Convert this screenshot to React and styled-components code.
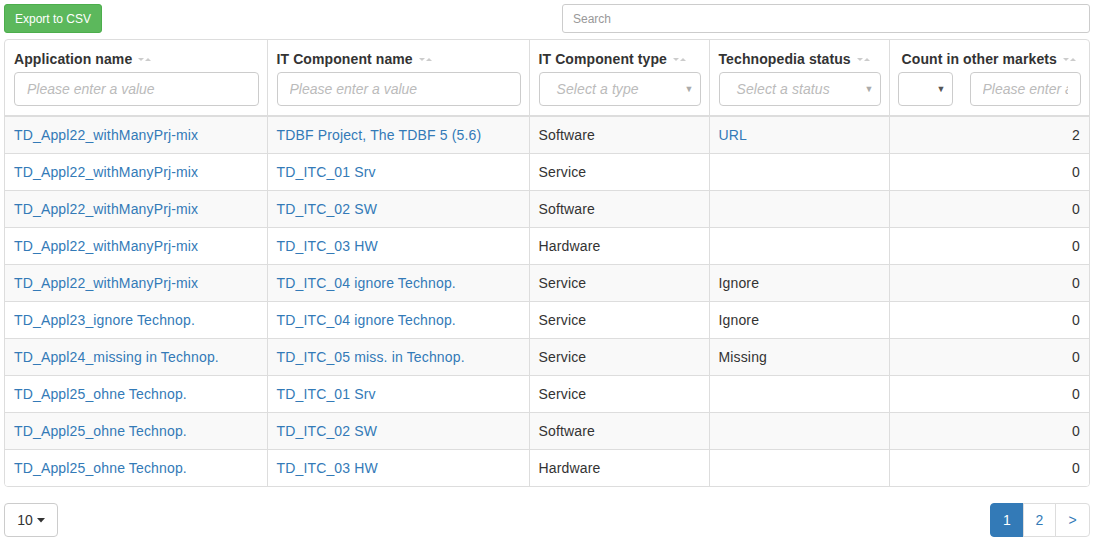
import React from "react"
import styled, { createGlobalStyle } from "styled-components"

const GlobalStyle = createGlobalStyle`
  body {
    margin: 0;
    font-family: "Liberation Sans", Arial, sans-serif;
    font-size: 14px;
    color: #333;
    background: #fff;
  }
  * { box-sizing: border-box; }
`

const Page = styled.div`
  padding: 4px 7px 0 4px;
  width: 1097px;
`

const Toolbar = styled.div`
  display: flex;
  justify-content: space-between;
  align-items: center;
  height: 29px;
  margin-bottom: 6px;
`

const ExportButton = styled.button`
  height: 29px;
  width: 98px;
  padding: 0;
  font-family: inherit;
  font-size: 12px;
  color: #fff;
  background: #5cb85c;
  border: 1px solid #4cae4c;
  border-radius: 3px;
`

const SearchInput = styled.input`
  width: 528px;
  height: 29px;
  padding: 5px 10px;
  font-family: inherit;
  font-size: 12px;
  border: 1px solid #ccc;
  border-radius: 3px;
  color: #555;
  &::placeholder { color: #999; }
`

const TableBox = styled.div`
  border: 1px solid #ddd;
  border-radius: 4px;
  overflow: hidden;
`

const Table = styled.table`
  width: 100%;
  border-collapse: collapse;
  table-layout: fixed;
  letter-spacing: 0.15px;
`

const Th = styled.th`
  text-align: left;
  vertical-align: top;
  padding: 9px 8px 9px 9px;
  border-left: 1px solid #ddd;
  border-bottom: 2px solid #ddd;
  font-weight: bold;
  letter-spacing: 0.1px;
  &:first-child { border-left: none; }
  &:last-child { padding-left: 8px; }
`

const ThTitle = styled.div`
  display: flex;
  align-items: center;
  justify-content: ${p => (p.$center ? "center" : "flex-start")};
  gap: 5px;
  height: 20px;
  margin-bottom: 3px;
  white-space: nowrap;
`

const FilterInput = styled.input`
  width: 100%;
  height: 34px;
  padding: 6px 12px;
  font-family: inherit;
  font-size: 14px;
  border: 1px solid #ccc;
  border-radius: 4px;
  min-width: 0;
  &::placeholder { color: #bbb; font-style: italic; }
`

const SelectBox = styled.div`
  position: relative;
  height: 34px;
  width: ${p => p.$width || "100%"};
  flex: ${p => (p.$width ? "none" : "1")};
  border: 1px solid #ccc;
  border-radius: 4px;
  display: flex;
  align-items: center;
  padding: 0 17px;
  color: #bbb;
  font-style: italic;
  font-weight: normal;
`

const SelectArrow = styled.span`
  position: absolute;
  right: 6px;
  top: 11px;
  font-size: 9px;
  font-style: normal;
  color: ${p => (p.$dark ? "#555" : "#aaa")};
`

const FilterRow = styled.div`
  display: flex;
  gap: 17px;
`

const Td = styled.td`
  height: 37px;
  padding: 0 9px;
  border-left: 1px solid #ddd;
  border-top: 1px solid #ddd;
  white-space: nowrap;
  overflow: hidden;
  text-align: ${p => (p.$right ? "right" : "left")};
  color: ${p => (p.$link ? "#337ab7" : "#333")};
  &:first-child { border-left: none; }
`

const Tr = styled.tr`
  background: ${p => (p.$striped ? "#f9f9f9" : "#fff")};
  &:first-child td { border-top: none; }
`

const Footer = styled.div`
  display: flex;
  justify-content: space-between;
  margin-top: 16px;
`

const SizeButton = styled.button`
  height: 34px;
  width: 54px;
  font-family: inherit;
  font-size: 14px;
  color: #333;
  background: #fff;
  border: 1px solid #ccc;
  border-radius: 4px;
  display: flex;
  align-items: center;
  justify-content: center;
  gap: 4px;
`

const Pager = styled.div`
  display: flex;
`

const PageItem = styled.span`
  height: 34px;
  width: ${p => p.$w}px;
  display: flex;
  align-items: center;
  justify-content: center;
  border: 1px solid ${p => (p.$active ? "#337ab7" : "#ddd")};
  margin-left: -1px;
  background: ${p => (p.$active ? "#337ab7" : "#fff")};
  color: ${p => (p.$active ? "#fff" : "#337ab7")};
  &:first-child { border-radius: 4px 0 0 4px; margin-left: 0; }
  &:last-child { border-radius: 0 4px 4px 0; }
`

const SortIcon = () => (
  <svg width="15" height="8" viewBox="0 0 15 8">
    <path d="M1 3 L7 3 L4 6 Z" fill="#ccc" />
    <path d="M8 6 L14 6 L11 3 Z" fill="#ccc" />
  </svg>
)

const Caret = () => (
  <svg width="8" height="5" viewBox="0 0 8 5">
    <path d="M0 0 L8 0 L4 4.5 Z" fill="#333" />
  </svg>
)

const rows = [
  ["TD_Appl22_withManyPrj-mix", "TDBF Project, The TDBF 5 (5.6)", "Software", "URL", 2],
  ["TD_Appl22_withManyPrj-mix", "TD_ITC_01 Srv", "Service", "", 0],
  ["TD_Appl22_withManyPrj-mix", "TD_ITC_02 SW", "Software", "", 0],
  ["TD_Appl22_withManyPrj-mix", "TD_ITC_03 HW", "Hardware", "", 0],
  ["TD_Appl22_withManyPrj-mix", "TD_ITC_04 ignore Technop.", "Service", "Ignore", 0],
  ["TD_Appl23_ignore Technop.", "TD_ITC_04 ignore Technop.", "Service", "Ignore", 0],
  ["TD_Appl24_missing in Technop.", "TD_ITC_05 miss. in Technop.", "Service", "Missing", 0],
  ["TD_Appl25_ohne Technop.", "TD_ITC_01 Srv", "Service", "", 0],
  ["TD_Appl25_ohne Technop.", "TD_ITC_02 SW", "Software", "", 0],
  ["TD_Appl25_ohne Technop.", "TD_ITC_03 HW", "Hardware", "", 0],
]

export default function App() {
  return (
    <Page>
      <GlobalStyle />
      <Toolbar>
        <ExportButton>Export to CSV</ExportButton>
        <SearchInput placeholder="Search" />
      </Toolbar>
      <TableBox>
        <Table>
          <colgroup>
            <col style={{ width: 262 }} />
            <col style={{ width: 262 }} />
            <col style={{ width: 180 }} />
            <col style={{ width: 180 }} />
            <col />
          </colgroup>
          <thead>
            <tr>
              <Th>
                <ThTitle>Application name <SortIcon /></ThTitle>
                <FilterInput placeholder="Please enter a value" />
              </Th>
              <Th>
                <ThTitle>IT Component name <SortIcon /></ThTitle>
                <FilterInput placeholder="Please enter a value" />
              </Th>
              <Th>
                <ThTitle>IT Component type <SortIcon /></ThTitle>
                <SelectBox>Select a type<SelectArrow>▼</SelectArrow></SelectBox>
              </Th>
              <Th>
                <ThTitle>Technopedia status <SortIcon /></ThTitle>
                <SelectBox>Select a status<SelectArrow>▼</SelectArrow></SelectBox>
              </Th>
              <Th>
                <ThTitle $center>Count in other markets <SortIcon /></ThTitle>
                <FilterRow>
                  <SelectBox $width="55px"><SelectArrow $dark>▼</SelectArrow></SelectBox>
                  <FilterInput placeholder="Please enter a value" />
                </FilterRow>
              </Th>
            </tr>
          </thead>
          <tbody>
            {rows.map((r, i) => (
              <Tr key={i} $striped={i % 2 === 0}>
                <Td $link>{r[0]}</Td>
                <Td $link>{r[1]}</Td>
                <Td>{r[2]}</Td>
                <Td $link={r[3] === "URL"}>{r[3]}</Td>
                <Td $right>{r[4]}</Td>
              </Tr>
            ))}
          </tbody>
        </Table>
      </TableBox>
      <Footer>
        <SizeButton>10 <Caret /></SizeButton>
        <Pager>
          <PageItem $active $w={34}>1</PageItem>
          <PageItem $w={33}>2</PageItem>
          <PageItem $w={35}>&gt;</PageItem>
        </Pager>
      </Footer>
    </Page>
  )
}
